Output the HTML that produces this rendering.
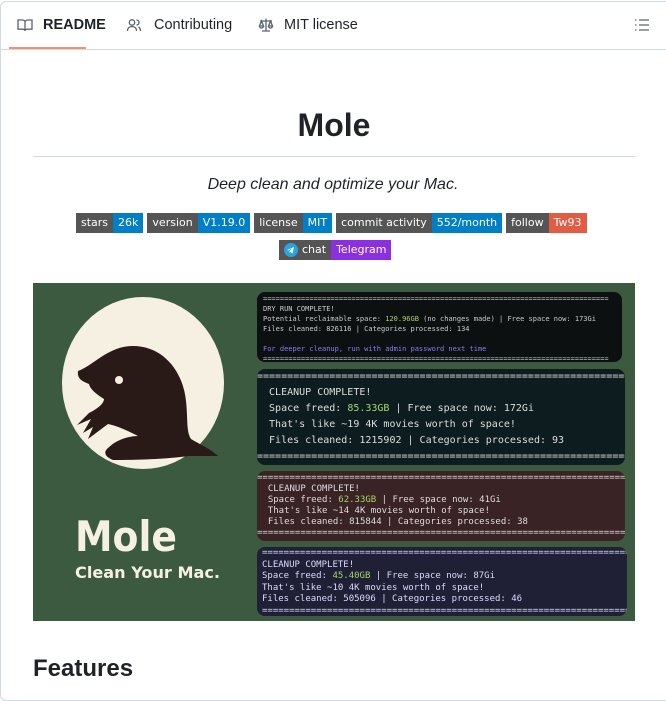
<!DOCTYPE html>
<html><head><meta charset="utf-8"><style>
*{margin:0;padding:0;box-sizing:border-box}
body{width:666px;height:666px;overflow:hidden;background:#fff;font-family:"Liberation Sans",sans-serif;color:#1f2328;position:relative}
.frame{position:absolute;left:0;top:1px;width:680px;height:700px;border:1px solid #d1d9e0;border-radius:6px}
.tabs{position:absolute;left:0;top:0;width:666px;height:50px;border-bottom:1px solid #d1d9e0}
.tab{position:absolute;top:17px;font-size:14.5px;display:flex;align-items:center;gap:10px;color:#1f2328}
.ul{position:absolute;left:9px;top:47px;width:77px;height:2px;background:#fd8c73}
.a{position:absolute}
h1{position:absolute;left:33px;width:602px;top:107px;text-align:center;font-size:32px;font-weight:bold}
.hr{position:absolute;left:33px;width:602px;top:156px;height:1px;background:#d1d9e0}
.sub{position:absolute;left:0;width:666px;top:176px;text-align:center;font-style:italic;font-size:16px}
.badges{position:absolute;top:213px;left:76px;display:flex;gap:4px}
.b{display:flex;height:20px;font-size:11px;color:#fff;line-height:20px;font-family:"DejaVu Sans",sans-serif}
.b span{padding:0 5px}
.l{background:#555}
.term{position:absolute;font-family:"DejaVu Sans Mono",monospace;color:#ddd;border-radius:8px;overflow:hidden;white-space:pre}
.g{color:#a5d36b}
</style></head><body>
<div class="frame"></div>
<div class="tabs">
 <div class="tab" style="left:17px;font-weight:bold"><svg width="16" height="16" viewBox="0 0 16 16" fill="none" stroke="#59636e" stroke-width="1.3"><path d="M1 3h4.5c1.4 0 2.5 1 2.5 2.3V14c0-1-1-1.8-2.2-1.8H1z M15 3h-4.5C9.1 3 8 4 8 5.3V14c0-1 1-1.8 2.2-1.8H15z"/></svg>README</div>
 <div class="tab" style="left:126px;gap:12px"><svg width="16" height="16" viewBox="0 0 16 16" fill="none" stroke="#59636e" stroke-width="1.3"><circle cx="6" cy="5.5" r="2.7"/><path d="M1.5 14c0-3 2-4.5 4.5-4.5S10.5 11 10.5 14M10.5 3a2.5 2.5 0 010 5M12.5 10c1.5.7 2 2 2 4"/></svg>Contributing</div>
 <div class="tab" style="left:258px"><svg width="16" height="16" viewBox="0 0 16 16" fill="none" stroke="#59636e" stroke-width="1.3"><path d="M8 1.5v12M4 14h8M2 4h12M3.5 4L1.5 9h4zM12.5 4l-2 5h4zM1.5 9a2 2 0 004 0M10.5 9a2 2 0 004 0"/></svg>MIT license</div>
 <svg class="a" style="left:634px;top:17px" width="16" height="16" viewBox="0 0 16 16" fill="none" stroke="#59636e" stroke-width="1.3"><path d="M5 3h10M5 8h10M5 13h10M1 3h1.5M1 8h1.5M1 13h1.5"/></svg>
 <div class="ul"></div>
</div>
<h1>Mole</h1>
<div class="hr"></div>
<div class="sub">Deep clean and optimize your Mac.</div>
<div class="badges">
 <div class="b"><span class="l">stars</span><span style="background:#007ec6">26k</span></div>
 <div class="b"><span class="l">version</span><span style="background:#007ec6">V1.19.0</span></div>
 <div class="b"><span class="l">license</span><span style="background:#007ec6">MIT</span></div>
 <div class="b"><span class="l">commit activity</span><span style="background:#007ec6">552/month</span></div>
 <div class="b"><span class="l">follow</span><span style="background:#e05d44">Tw93</span></div>
</div>
<div class="b a" style="left:279px;top:240px"><span class="l" style="display:flex;align-items:center;gap:4px"><svg width="14" height="14" viewBox="0 0 14 14"><circle cx="7" cy="7" r="7" fill="#2aa3df"/><path d="M3 7l7-3-1.5 6.5-2-1.5-1 1v-2l3-3-4 2.5z" fill="#fff"/></svg>chat</span><span style="background:#8b2fe0">Telegram</span></div>

<div class="a" style="left:33px;top:283px;width:602px;height:338px;background:#3c5a3f"></div>
<svg class="a" style="left:33px;top:283px" width="220" height="338" viewBox="0 0 220 338">
 <ellipse cx="110" cy="100" rx="81" ry="86" fill="#f6f0e3"/>
 <path d="M45 88c15-5 30-25 55-25 30 0 50 25 53 55 2 18 0 30 5 38 8 5 20 10 27 17h-30c-20 3-50 4-75 4-8-3-10-8-5-12 8-8 20-12 30-12-10-5-20-10-30-12l-20 15 5-12-10 6 8-14-14 6 12-12c10-5 15-10 15-14-8-5-14-10-15-15-8-3-12-6-11-13z" fill="#2a1a17"/>
 <circle cx="86" cy="97" r="4" fill="#f6f0e3"/>
 <text x="42" y="268" font-family="DejaVu Sans" font-weight="bold" font-size="42" fill="#f6f0e3" textLength="102" lengthAdjust="spacingAndGlyphs">Mole</text>
 <text x="42" y="295" font-family="DejaVu Sans" font-weight="bold" font-size="16" fill="#f6f0e3" textLength="145" lengthAdjust="spacingAndGlyphs">Clean Your Mac.</text>
</svg>
<div class="term" style="left:257px;top:292px;width:365px;height:70px;background:#0c1011;font-size:7px;line-height:10px;padding:2px 6px;color:#ccc">==================================================================================
DRY RUN COMPLETE!
Potential reclaimable space: <span class="g">120.96GB</span> (no changes made) | Free space now: 173Gi
Files cleaned: 826116 | Categories processed: 134

<span style="color:#8a7cf0">For deeper cleanup, run with admin password next time</span>
==================================================================================</div>
<div class="term" style="left:257px;top:369px;width:368px;height:96px;background:#0d1d1f;font-size:10px;line-height:16px;padding:0 0 0 0">=====================================================================
  CLEANUP COMPLETE!
  Space freed: <span class="g">85.33GB</span> | Free space now: 172Gi
  That's like ~19 4K movies worth of space!
  Files cleaned: 1215902 | Categories processed: 93
=====================================================================</div>
<div class="term" style="left:257px;top:471px;width:368px;height:70px;background:#3a2325;font-size:9px;line-height:11px;padding:2px 0 0 0">======================================================================
  CLEANUP COMPLETE!
  Space freed: <span class="g">62.33GB</span> | Free space now: 41Gi
  That's like ~14 4K movies worth of space!
  Files cleaned: 815844 | Categories processed: 38
======================================================================</div>
<div class="term" style="left:257px;top:547px;width:370px;height:69px;background:#1f2035;font-size:9px;line-height:11.5px;padding:1px 0 0 5px;color:#d8dcff">=====================================================================
CLEANUP COMPLETE!
Space freed: <span class="g">45.40GB</span> | Free space now: 87Gi
That's like ~10 4K movies worth of space!
Files cleaned: 505096 | Categories processed: 46
=====================================================================</div>
<div class="a" style="left:33px;top:655px;font-size:24px;font-weight:bold">Features</div>
</body></html>
